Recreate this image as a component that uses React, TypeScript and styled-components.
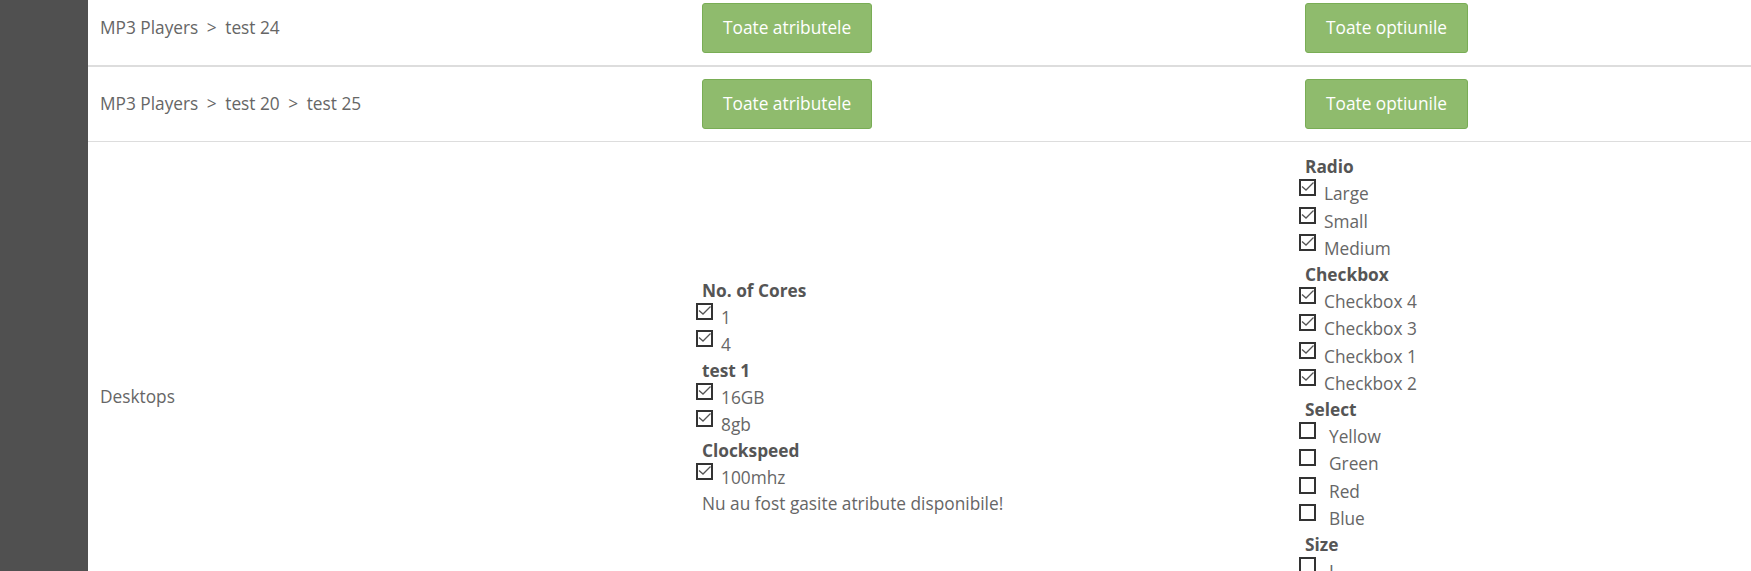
import React from "react";
import styled, { createGlobalStyle } from "styled-components";

const GlobalStyle = createGlobalStyle`
  html, body {
    margin: 0;
    padding: 0;
    background: #ffffff;
    overflow: hidden;
  }
  body {
    font-family: "Open Sans", "DejaVu Sans", sans-serif;
    font-size: 17.3px;
    color: #666666;
  }
`;

const Page = styled.div`
  display: flex;
  min-height: 100vh;
`;

const Sidebar = styled.aside`
  width: 88px;
  flex-shrink: 0;
  background: #505050;
`;

const Main = styled.main`
  flex: 1;
  min-width: 0;
  overflow: hidden;
`;

const Table = styled.div`
  margin-top: -9px;
  display: flex;
  flex-direction: column;
`;

const Row = styled.div<{ $border: number }>`
  display: grid;
  grid-template-columns: 596px 603px 1fr;
  align-items: center;
  border-bottom: ${(p) => p.$border}px solid #dddddd;
`;

const Cell = styled.div`
  padding: 12px 12px;
  min-width: 0;
`;

const Crumbs = styled.div`
  font-size: 17.3px;
  line-height: 24px;
  color: #666666;
  white-space: nowrap;
`;

const Sep = styled.span`
  margin: 0 8.5px;
`;

const GreenButton = styled.button`
  margin-left: 6px;
  font-family: "Open Sans", "DejaVu Sans", sans-serif;
  font-size: 17.3px;
  line-height: 24px;
  padding: 12px 20px;
  color: #ffffff;
  background: #8fbb6d;
  border: 1px solid #79ad55;
  border-radius: 3px;
  cursor: pointer;
`;

const AttrList = styled.div`
  display: flex;
  flex-direction: column;
`;

const GroupTitle = styled.div`
  font-weight: 700;
  font-size: 17.3px;
  line-height: 24px;
  color: #555555;
  margin: 1px 0 0;
  padding-left: 6px;
`;

const Option = styled.label<{ $gap: number }>`
  display: flex;
  align-items: flex-start;
  gap: ${(p) => p.$gap}px;
  height: 27.5px;
`;

const Box = styled.span`
  width: 17px;
  height: 17px;
  box-sizing: border-box;
  border: 2px solid #333333;
  background: #ffffff;
  display: flex;
  align-items: flex-start;
  justify-content: flex-start;
  flex-shrink: 0;
`;

const OptionText = styled.span`
  margin-top: 3px;
  font-size: 17.3px;
  line-height: 24px;
  color: #666666;
  white-space: nowrap;
`;

const Message = styled.div`
  margin-top: 1.5px;
  padding-left: 6px;
  font-size: 17.3px;
  line-height: 24px;
  color: #666666;
`;

const Check = () => (
  <svg width="13" height="13" viewBox="0 0 13 13">
    <path d="M1 5.5 L5 9 L12.5 1.5" fill="none" stroke="#555" strokeWidth="1.3" />
  </svg>
);

type Group = { title: string; options: string[]; checked: boolean };

const AttrOption = ({ label, checked, gap }: { label: string; checked: boolean; gap: number }) => (
  <Option $gap={gap}>
    <Box>{checked && <Check />}</Box>
    <OptionText>{label}</OptionText>
  </Option>
);

const attrGroups: Group[] = [
  { title: "No. of Cores", options: ["1", "4"], checked: true },
  { title: "test 1", options: ["16GB", "8gb"], checked: true },
  { title: "Clockspeed", options: ["100mhz"], checked: true },
];

const optGroups: Group[] = [
  { title: "Radio", options: ["Large", "Small", "Medium"], checked: true },
  { title: "Checkbox", options: ["Checkbox 4", "Checkbox 3", "Checkbox 1", "Checkbox 2"], checked: true },
  { title: "Select", options: ["Yellow", "Green", "Red", "Blue"], checked: false },
  { title: "Size", options: ["L", "M", "S"], checked: false },
];

const Breadcrumb = ({ parts }: { parts: string[] }) => (
  <Crumbs>
    {parts.map((p, i) => (
      <React.Fragment key={i}>
        {i > 0 && <Sep>&gt;</Sep>}
        {p}
      </React.Fragment>
    ))}
  </Crumbs>
);

export default function App() {
  return (
    <>
      <GlobalStyle />
      <Page>
        <Sidebar />
        <Main>
          <Table>
            <Row $border={2}>
              <Cell>
                <Breadcrumb parts={["MP3 Players", "test 24"]} />
              </Cell>
              <Cell>
                <GreenButton>Toate atributele</GreenButton>
              </Cell>
              <Cell>
                <GreenButton>Toate optiunile</GreenButton>
              </Cell>
            </Row>
            <Row $border={1}>
              <Cell>
                <Breadcrumb parts={["MP3 Players", "test 20", "test 25"]} />
              </Cell>
              <Cell>
                <GreenButton>Toate atributele</GreenButton>
              </Cell>
              <Cell>
                <GreenButton>Toate optiunile</GreenButton>
              </Cell>
            </Row>
            <Row $border={1}>
              <Cell>
                <Crumbs>Desktops</Crumbs>
              </Cell>
              <Cell>
                <AttrList>
                  {attrGroups.map((g) => (
                    <React.Fragment key={g.title}>
                      <GroupTitle>{g.title}</GroupTitle>
                      {g.options.map((o) => (
                        <AttrOption key={o} label={o} checked={g.checked} gap={8} />
                      ))}
                    </React.Fragment>
                  ))}
                  <Message>Nu au fost gasite atribute disponibile!</Message>
                </AttrList>
              </Cell>
              <Cell>
                <AttrList>
                  {optGroups.map((g) => (
                    <React.Fragment key={g.title}>
                      <GroupTitle>{g.title}</GroupTitle>
                      {g.options.map((o) => (
                        <AttrOption key={o} label={o} checked={g.checked} gap={g.checked ? 8 : 13} />
                      ))}
                    </React.Fragment>
                  ))}
                </AttrList>
              </Cell>
            </Row>
          </Table>
        </Main>
      </Page>
    </>
  );
}
